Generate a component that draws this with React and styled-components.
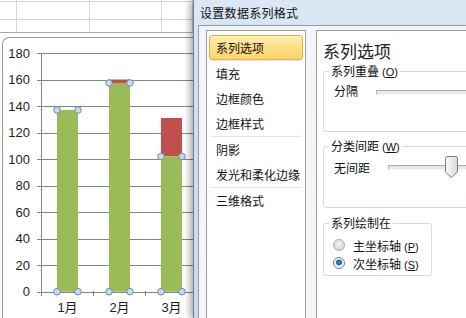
import React from "react";
import styled, { createGlobalStyle } from "styled-components";

const GlobalStyle = createGlobalStyle`
  html, body {
    margin: 0;
    padding: 0;
  }
  body {
    width: 466px;
    height: 318px;
    overflow: hidden;
    background: #fff;
    font-family: "Noto Sans CJK SC", "Liberation Sans", sans-serif;
  }
`;

const Screen = styled.div`
  position: relative;
  display: flex;
  width: 466px;
  height: 318px;
  overflow: hidden;
`;

/* ---------- excel side ---------- */

const Sheet = styled.div`
  width: 193px;
  flex: none;
  display: flex;
  flex-direction: column;
  background: #fff;
`;

const Cells = styled.div`
  height: 32px;
  display: grid;
  grid-template-columns: 17px 73px 72px 1fr;
  grid-template-rows: 2px 18px 1fr;
  border-bottom: 1px solid #a9a9a9;
`;

const Cell = styled.div`
  border-right: 1px solid #d6d6d6;
  border-bottom: ${(p) => (p.$last ? "none" : "1px solid #d6d6d6")};
`;

const ChartFrame = styled.div`
  flex: 1;
  margin: 4px 0 0 2px;
  border: 1px solid #9a9a9a;
  border-right: none;
  border-bottom: none;
  border-top-left-radius: 7px;
  background: #fff;
  overflow: hidden;
`;

const Plot = styled.svg`
  display: block;
`;

/* ---------- dialog ---------- */

const Dialog = styled.div`
  position: relative;
  z-index: 1;
  flex: 1;
  display: flex;
  flex-direction: column;
  background: linear-gradient(180deg, #dbe7f4 0%, #cfdff0 40%, #c9daee 100%);
  border-left: 1px solid #6f7f94;
  box-shadow: -3px 0 7px rgba(0, 0, 0, 0.35);
`;

const TitleBar = styled.div`
  height: 25px;
  display: flex;
  align-items: center;
  padding-left: 6px;
  font-size: 12px;
  letter-spacing: 0.3px;
  color: #111;
`;

const Body = styled.div`
  flex: 1;
  display: flex;
  gap: 10px;
  margin-left: 4px;
  padding: 4px 0 0 7px;
  background: #f3f5f8;
  border: 1px solid #8d9db2;
  border-right: none;
  border-bottom: none;
`;

const NavList = styled.div`
  width: 100px;
  flex: none;
  box-sizing: border-box;
  padding: 4px 2px 0;
  background: #fff;
  border: 1px solid #9c9c9c;
  border-bottom: none;
`;

const NavItem = styled.div`
  height: 25px;
  box-sizing: border-box;
  display: flex;
  align-items: center;
  padding-left: 6px;
  font-size: 12px;
  color: #111;
  border-radius: 3px;
  border: 1px solid ${(p) => (p.$active ? "#e0b04a" : "transparent")};
  background: ${(p) =>
    p.$active ? "linear-gradient(180deg, #fff0b3 0%, #fee08a 45%, #fdd567 100%)" : "transparent"};
  box-shadow: ${(p) => (p.$divider ? "0 1px 0 #e6e6e6" : "none")};
  margin-bottom: ${(p) => (p.$divider ? "1px" : "0")};
`;

const Options = styled.div`
  width: 220px;
  flex: none;
  box-sizing: border-box;
  padding: 9px 0 0 6px;
  background: #fff;
  border: 1px solid #9c9c9c;
  border-right: none;
  border-bottom: none;
`;

const Heading = styled.div`
  font-size: 17px;
  line-height: 22px;
  color: #222;
`;

const Group = styled.div`
  width: ${(p) => p.$w || 240}px;
  height: ${(p) => p.$h}px;
  box-sizing: border-box;
  margin-top: ${(p) => p.$mt}px;
  border: 1px solid #d3dbe3;
  border-radius: 3px;
`;

const Legend = styled.div`
  width: fit-content;
  margin: -9px 0 0 5px;
  padding: 0 2px;
  background: #fff;
  font-size: 12px;
  line-height: 16px;
  color: #111;
`;

const Key = styled.span`
  font-family: "Liberation Sans", sans-serif;
  font-size: 11px;
  margin-left: 3px;
  u {
    text-underline-offset: 1px;
  }
`;

const SliderRow = styled.div`
  display: flex;
  align-items: center;
  height: 20px;
  margin-top: ${(p) => p.$mt}px;
  padding-left: 10px;
  font-size: 12px;
  color: #111;
`;

const SliderLabel = styled.span`
  margin-right: 18px;
`;

const Track = styled.div`
  position: relative;
  flex: 1;
  height: 3px;
  margin-top: ${(p) => p.$dy || 0}px;
  background: #e9e9e9;
  border-top: 1px solid #a8a8a8;
  border-bottom: 1px solid #f6f6f6;
  border-left: 1px solid #b8b8b8;
`;

const Thumb = styled.svg`
  position: absolute;
  left: ${(p) => p.$left}px;
  top: -10px;
`;

const RadioRow = styled.div`
  display: flex;
  align-items: center;
  gap: 8px;
  height: 18px;
  margin-top: ${(p) => p.$mt || 0}px;
  padding-left: 9px;
  font-size: 12px;
  color: #111;
`;

const RadioDot = styled.span`
  width: 12px;
  height: 12px;
  box-sizing: border-box;
  flex: none;
  border-radius: 50%;
  border: 1px solid ${(p) => (p.$on ? "#6a7f96" : "#b0b0b0")};
  background: ${(p) =>
    p.$on
      ? "radial-gradient(circle at 50% 45%, #3f8fd6 0, #1d5e9e 2.6px, #e9eef3 3.3px, #f4f6f8 6px)"
      : "radial-gradient(circle at 50% 40%, #f4f4f4 0, #d4d4d4 6px)"};
`;

const Ring = styled.svg`
  position: absolute;
  left: 0;
  top: 0;
  pointer-events: none;
`;

/* ---------- chart data ---------- */

const base = 291.7;
const scale = 1.3261;
const yOf = (v) => base - v * scale;
const ticks = [0, 20, 40, 60, 80, 100, 120, 140, 160, 180];

const bars = [
  { x: 57, label: "1月", green: 137 },
  { x: 109, label: "2月", green: 157.4, red: 160 },
  { x: 161, label: "3月", green: 102, red: 131 },
];

const navItems = [
  { text: "系列选项", active: true, divider: true },
  { text: "填充" },
  { text: "边框颜色" },
  { text: "边框样式", divider: true },
  { text: "阴影" },
  { text: "发光和柔化边缘", divider: true },
  { text: "三维格式" },
];

const Chart = () => (
  <Plot width="190" height="280" viewBox="3 38 190 280">
    {ticks.map((t) => (
      <g key={t}>
        <line x1="37" x2="200" y1={Math.round(yOf(t)) + 0.5} y2={Math.round(yOf(t)) + 0.5} stroke="#858585" />
        <text
          x="30"
          y={yOf(t) + 4.6}
          textAnchor="end"
          fontSize="13"
          fontFamily="Liberation Sans, sans-serif"
          fill="#1e1e1e"
        >
          {t}
        </text>
      </g>
    ))}
    <line x1="41.5" x2="41.5" y1="53" y2="296" stroke="#858585" />
    {[93.5, 145.5, 197.5].map((x) => (
      <line key={x} x1={x} x2={x} y1="291" y2="296" stroke="#858585" />
    ))}
    {bars.map((b) => {
      const top = yOf(b.green);
      return (
        <g key={b.label}>
          {b.red && <rect x={b.x} y={yOf(b.red)} width="21" height={top - yOf(b.red)} fill="#c0504d" />}
          <rect x={b.x} y={top} width="21" height={base - top} fill="#9bbb59" />
          {[
            [b.x, top],
            [b.x + 21, top],
            [b.x, base],
            [b.x + 21, base],
          ].map(([cx, cy], i) => (
            <circle key={i} cx={cx} cy={cy} r="3.3" fill="#c8dbea" stroke="#6d8dac" strokeWidth="1" />
          ))}
          <text
            x={b.x + 10.5}
            y="312"
            textAnchor="middle"
            fontSize="13"
            fontFamily="Liberation Sans, Noto Sans CJK SC, sans-serif"
            fill="#1e1e1e"
          >
            {b.label}
          </text>
        </g>
      );
    })}
  </Plot>
);

export default function App() {
  return (
    <Screen>
      <GlobalStyle />
      <Sheet>
        <Cells>
          {Array.from({ length: 12 }).map((_, i) => (
            <Cell key={i} $last={i >= 8} />
          ))}
        </Cells>
        <ChartFrame>
          <Chart />
        </ChartFrame>
      </Sheet>

      <Dialog>
        <TitleBar>设置数据系列格式</TitleBar>
        <Body>
          <NavList>
            {navItems.map((n) => (
              <NavItem key={n.text} $active={n.active} $divider={n.divider}>
                {n.text}
              </NavItem>
            ))}
          </NavList>

          <Options>
            <Heading>系列选项</Heading>

            <Group $h={61} $mt={9}>
              <Legend>
                系列重叠<Key>(<u>O</u>)</Key>
              </Legend>
              <SliderRow $mt={0}>
                <SliderLabel>分隔</SliderLabel>
                <Track $dy={4} />
              </SliderRow>
            </Group>

            <Group $h={62} $mt={14}>
              <Legend>
                分类间距<Key>(<u>W</u>)</Key>
              </Legend>
              <SliderRow $mt={2}>
                <SliderLabel>无间距</SliderLabel>
                <Track $dy={1}>
                  <Thumb $left={56} width="13" height="22" viewBox="0 0 13 22">
                    <defs>
                      <linearGradient id="thumbFill" x1="0" x2="1" y1="0" y2="0">
                        <stop offset="0" stopColor="#fbfbfb" />
                        <stop offset="1" stopColor="#d9d9d9" />
                      </linearGradient>
                    </defs>
                    <path
                      d="M2.5 0.5 H10.5 Q12.5 0.5 12.5 2.5 V16 L6.5 21.5 L0.5 16 V2.5 Q0.5 0.5 2.5 0.5 Z"
                      fill="url(#thumbFill)"
                      stroke="#7b7b7b"
                    />
                  </Thumb>
                </Track>
              </SliderRow>
            </Group>

            <Group $w={109} $h={53} $mt={15}>
              <Legend>系列绘制在</Legend>
              <RadioRow $mt={5}>
                <RadioDot />
                <span>
                  主坐标轴<Key>(<u>P</u>)</Key>
                </span>
              </RadioRow>
              <RadioRow>
                <RadioDot $on />
                <span>
                  次坐标轴<Key>(<u>S</u>)</Key>
                </span>
              </RadioRow>
            </Group>
          </Options>
        </Body>
      </Dialog>

      <Ring width="466" height="318" viewBox="0 0 466 318">
        <ellipse
          cx="377"
          cy="266"
          rx="76"
          ry="16"
          transform="rotate(-1.5 377 266)"
          fill="none"
          stroke="#d42424"
          strokeWidth="2"
        />
      </Ring>
    </Screen>
  );
}
